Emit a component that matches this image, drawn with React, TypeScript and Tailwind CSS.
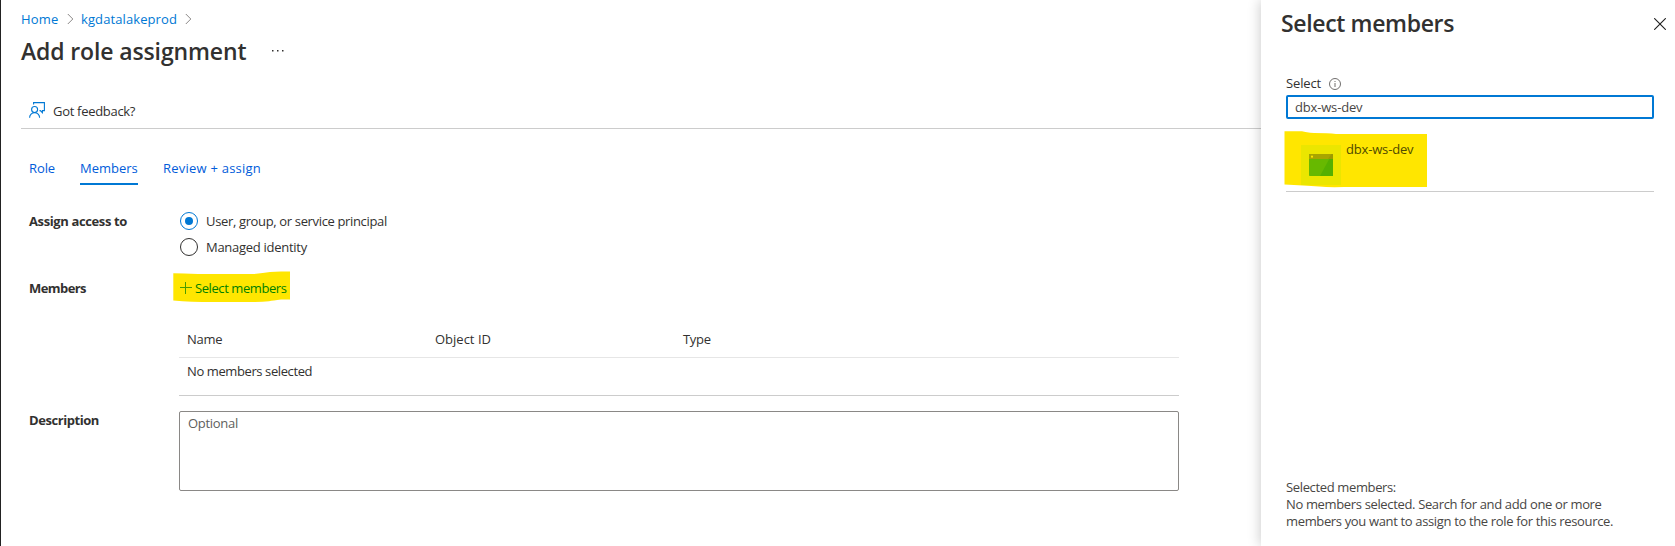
import type { ReactNode } from "react";

function Chevron() {
  return (
    <svg className="block h-3 w-[7px]" viewBox="0 0 7 12" fill="none" stroke="#8a8886">
      <path d="M.8 1l5 5-5 5" />
    </svg>
  );
}

function FeedbackIcon() {
  return (
    <svg className="block h-4 w-4" viewBox="0 0 16 16" fill="none" stroke="#0078d4" strokeWidth="1.1">
      <path d="M4.6 2.5V.6h10.800v8h-2v2L11.300 8.600h-.8" />
      <circle cx="5.6" cy="7.500" r="3" />
      <path d="M.6 15.800c0-3 2.200-5.200 5-5.200s5 2.200 5 5.200" />
    </svg>
  );
}

function InfoIcon() {
  return (
    <svg className="block h-3 w-3" viewBox="0 0 12 12" fill="none" stroke="#605e5c" strokeWidth="0.9">
      <circle cx="6" cy="6" r="5.5" />
      <path d="M6 5v4M6 3v1" />
    </svg>
  );
}

function CloseIcon() {
  return (
    <svg className="block h-3 w-3" viewBox="0 0 12 12" fill="none" stroke="#1f1f1f" strokeWidth="1.1">
      <path d="M.2.2l11.6 11.6M11.8.2L.2 11.8" />
    </svg>
  );
}

function AppIcon() {
  return (
    <svg className="block h-[22px] w-6" viewBox="0 0 24 22">
      <rect width="24" height="22" rx="0.8" fill="#67b900" />
      <path d="M20.5 4.5H24V22H11z" fill="#54b000" />
      <path d="M0 .8Q0 0 .8 0h22.4q.8 0 .8.8V5H0z" fill="#a8a500" />
      <path d="M22.5 0h.7q.8 0 .8.8V5h-5z" fill="#9c9a00" />
      <circle cx="3" cy="2.7" r="1.1" fill="#ffe600" />
    </svg>
  );
}

function Radio({ checked, label, tracking }: { checked?: boolean; label: string; tracking: string }) {
  return (
    <div className="flex h-[26px] items-start gap-2">
      <span
        className={
          checked
            ? "flex h-[18px] w-[18px] items-center justify-center rounded-full border border-[#0078d4]"
            : "h-[18px] w-[18px] rounded-full border border-[#323130]"
        }
      >
        {checked && <span className="h-2 w-2 rounded-full bg-[#0078d4]" />}
      </span>
      <span className={tracking}>{label}</span>
    </div>
  );
}

function Label({ children, className }: { children: ReactNode; className: string }) {
  return <div className={`w-[150px] shrink-0 font-bold ${className}`}>{children}</div>;
}

export default function App() {
  return (
    <div className="flex h-[546px] w-[1675px] overflow-hidden bg-white font-['Open_Sans','Noto_Sans',sans-serif] text-[13px] leading-[18px] text-[#323130]">
      <main className="flex w-[1261px] shrink-0 flex-col border-l border-[#222] pl-5">
        <nav className="mt-[10px] flex items-center text-[#0078d4]">
          <span className="w-[46px] tracking-[0.2px]">Home</span>
          <Chevron />
          <span className="ml-[7px] w-[104px] tracking-[0.1px]">kgdatalakeprod</span>
          <Chevron />
        </nav>
        <header className="mt-[7px] flex h-[32px] items-center">
          <h1 className="w-[251px] whitespace-nowrap text-[23px] font-semibold leading-[32px] tracking-[-0.13px] text-[#323130]">
            Add role assignment
          </h1>
          <svg className="h-[2px] w-3" viewBox="0 0 12 2" fill="#323130">
            <path d="M0 0h1.500v1.500H0zM5 0h1.500v1.500H5zM10 0h1.500v1.500H10z" />
          </svg>
        </header>
        <div className="mt-[35px] flex h-[27px] items-start border-b border-[#ccc] pl-2">
          <FeedbackIcon />
          <span className="ml-2 tracking-[-0.3px]">Got feedback?</span>
        </div>

        <div className="mt-[30px] flex h-[26px] gap-[25px] pl-2 text-[#015cda]">
          <span className="w-[26px] tracking-[-0.1px]">Role</span>
          <span className="w-[58px] border-b-2 border-[#0078d4]">Members</span>
          <span className="tracking-[0.23px]">Review + assign</span>
        </div>

        <div className="mt-[27px] flex pl-2">
          <Label className="tracking-[-0.38px]">Assign access to</Label>
          <div className="pl-px">
            <Radio checked label="User, group, or service principal" tracking="tracking-[-0.35px]" />
            <Radio label="Managed identity" tracking="tracking-[-0.28px]" />
          </div>
        </div>

        <div className="mt-[15px] flex pl-2">
          <Label className="tracking-[-0.57px]">Members</Label>
          <div className="relative flex items-center">
            <svg className="absolute -left-[6px] -top-[8px] h-[32px] w-[118px]" viewBox="0 0 118 32">
              <path
                d="M.3 2.300Q10 2.300 25 3H80Q90 2 97 1Q102 .5 108 .5H117V28.500H108Q100 29.500 96 30.200Q90 31 82 31H40Q18 31 .3 29.500z"
                fill="#ffe600"
              />
            </svg>
            <svg className="relative ml-px h-[12px] w-[12px]" viewBox="0 0 12 12" stroke="#4a9c00">
              <path d="M0 5.500h12M5.500 0v12" />
            </svg>
            <span className="relative ml-[3px] tracking-[-0.42px] text-[#007f00]">Select members</span>
          </div>
        </div>

        <div className="ml-[158px] mt-[24px] w-[1000px]">
          <div className="flex h-[37px] items-center border-b border-[#e6e6e6] pl-2 font-medium">
            <span className="w-[248px] tracking-[-0.3px]">Name</span>
            <span className="w-[248px]">Object ID</span>
            <span className="tracking-[-0.3px]">Type</span>
          </div>
          <div className="h-[38px] border-b border-[#ccc] pl-2 pt-1 tracking-[-0.4px]">No members selected</div>
        </div>

        <div className="mt-[15px] flex pl-2">
          <Label className="tracking-[-0.44px]">Description</Label>
          <div className="h-[80px] w-[1000px] rounded-[2px] border border-[#8a8886] px-2 pt-[2px] tracking-[-0.29px] text-[#605e5c]">
            Optional
          </div>
        </div>
      </main>

      <aside className="flex grow flex-col bg-white pl-[25px] pr-[21px] shadow-[-1px_0_12px_rgba(0,0,0,0.2)]">
        <div className="-ml-[5px] -mr-[12px] mt-2 flex h-8 items-center justify-between">
          <h2 className="whitespace-nowrap pb-[2px] text-[23px] font-semibold leading-8 tracking-[-0.35px]">
            Select members
          </h2>
          <CloseIcon />
        </div>
        <div className="mt-[34px] flex h-[21px] items-start gap-2">
          <span className="tracking-[-0.15px]">Select</span>
          <span className="pt-1">
            <InfoIcon />
          </span>
        </div>
        <div className="h-6 rounded-[2px] border-2 border-[#0078d4] pl-[7px] pt-[1px] tracking-[-0.17px] text-[#484644]">
          dbx-ws-dev
        </div>
        <div className="relative flex h-[73px] border-b border-[#ccc]">
          <svg className="absolute -left-[2px] top-[12px] h-[58px] w-[144px]" viewBox="0 0 144 58">
            <path d="M.5 .3H18Q22 1.500 30 2Q44 2 52 3H143V56H60Q45 56.500 35 55.500Q20 54.500 .5 53.500z" fill="#ffe600" />
          </svg>
          <div className="relative ml-[15px] mt-[26px] flex h-10 w-10 items-start bg-[#ebe600] pl-2 pt-[9px]">
            <AppIcon />
          </div>
          <span className="relative ml-[5px] mt-[21px] tracking-[-0.17px] text-[#4f4a00]">dbx-ws-dev</span>
        </div>
        <div className="mt-auto whitespace-nowrap pb-4 leading-[17px] text-[#484644]">
          <div className="tracking-[-0.36px]">Selected members:</div>
          <div className="tracking-[-0.35px]">No members selected. Search for and add one or more</div>
          <div className="tracking-[-0.35px]">members you want to assign to the role for this resource.</div>
        </div>
      </aside>
    </div>
  );
}
